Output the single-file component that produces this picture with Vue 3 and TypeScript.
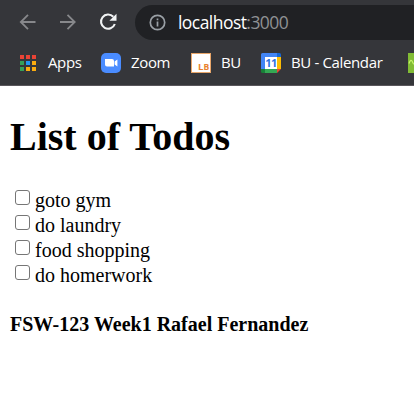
<script setup lang="ts">
import { ref } from 'vue'

interface Todo {
  id: number
  title: string
  done: boolean
}

const todos = ref<Todo[]>([
  { id: 1, title: 'goto gym', done: false },
  { id: 2, title: 'do laundry', done: false },
  { id: 3, title: 'food shopping', done: false },
  { id: 4, title: 'do homerwork', done: false },
])

const dots: string[] = [
  '#ea4335', '#ea4335', '#ea4335',
  '#34a05a', '#2196f3', '#fbac10',
  '#34a05a', '#fbac10', '#fbac10',
]
</script>

<template>
  <div class="window">
    <header class="chrome">
      <div class="toolbar">
        <svg class="nav back" width="18" height="18" viewBox="0 0 18 18">
          <path d="M16.5 9H2M9 1.8 1.8 9 9 16.2" />
        </svg>
        <svg class="nav forward" width="18" height="18" viewBox="0 0 18 18">
          <path d="M1 9h14.5M8.5 1.8 15.7 9l-7.2 7.2" />
        </svg>
        <svg class="reload" width="18" height="18" viewBox="0 0 18 18">
          <path class="arc" d="M14.3 3.8A7.1 7.1 0 1 0 15.8 11" />
          <path class="tip" d="M17.5 .7v7.1h-7.1z" />
        </svg>
        <div class="address">
          <svg class="info" width="17" height="17" viewBox="0 0 17 17">
            <circle cx="8.5" cy="8.5" r="7.2" />
            <path d="M8.5 7.5v5M8.5 4.5v1.7" />
          </svg>
          <span class="url">localhost<span class="port">:3000</span></span>
        </div>
      </div>
      <nav class="bookmarks">
        <a class="bookmark apps">
          <span class="grid"><i v-for="(c, i) in dots" :key="i" :style="{ background: c }"></i></span>
          <span class="label">Apps</span>
        </a>
        <a class="bookmark zoom">
          <svg width="20" height="20" viewBox="0 0 20 20">
            <rect width="20" height="20" rx="5" fill="#4a8cff" />
            <path d="M4 6h7q2 0 2 2v5.500H6q-2 0-2-2zM13.600 8.500 16.400 6.500v7l-2.800-2z" fill="#fff" />
          </svg>
          <span class="label">Zoom</span>
        </a>
        <a class="bookmark bu">
          <span class="lb">L<small>B</small></span>
          <span class="label">BU</span>
        </a>
        <a class="bookmark calendar">
          <svg width="20" height="20" viewBox="0 0 20 20">
            <path d="M0 1.500Q0 0 1.500 0H16v4H4v12H0z" fill="#4285f4" />
            <path d="M16 0h2.500Q20 0 20 1.500V4h-4z" fill="#1967d2" />
            <path d="M16 4h4v12h-4z" fill="#fbbc04" />
            <path d="M4 16h12v4H4z" fill="#34a853" />
            <path d="M0 16h4v4H1.500Q0 20 0 18.500z" fill="#188038" />
            <path d="M16 16h4l-4 4z" fill="#ea4335" />
            <path d="M4 4h12v12H4z" fill="#fff" />
            <text x="10" y="14" text-anchor="middle">11</text>
          </svg>
          <span class="label">BU - Calendar</span>
        </a>
        <a class="bookmark next">
          <svg width="20" height="20" viewBox="0 0 20 20">
            <rect width="20" height="20" fill="#82bc35" />
            <path d="M1 10.500Q3 5 4.500 9T8 10" fill="none" stroke="#c7f36b" stroke-width="1.200" />
          </svg>
        </a>
      </nav>
    </header>
    <main class="page">
      <h1>List of Todos</h1>
      <ul class="todos">
        <li v-for="todo in todos" :key="todo.id">
          <label>
            <input v-model="todo.done" type="checkbox" />
            <span>{{ todo.title }}</span>
          </label>
        </li>
      </ul>
      <h4>FSW-123 Week1 Rafael Fernandez</h4>
    </main>
  </div>
</template>

<style>
body {
  background: #fff;
  overflow: hidden;
}
</style>

<style scoped>
.window {
  width: 414px;
  height: 402px;
  overflow: hidden;
  background: #fff;
}
.chrome {
  box-sizing: border-box;
  height: 86px;
  background: #35363a;
  border-bottom: 1px solid #59565b;
  font-family: "Open Sans", "Noto Sans", sans-serif;
  color: #fff;
  overflow: hidden;
}
.toolbar {
  display: flex;
  align-items: center;
  height: 35px;
  padding: 5px 0 0 19px;
}
svg {
  display: block;
  flex: none;
}
.nav {
  fill: none;
  stroke: #87888b;
  stroke-width: 1.8;
  margin-right: 22px;
  position: relative;
  top: -1px;
}
.reload {
  position: relative;
  top: -1px;
}
.arc {
  fill: none;
  stroke: #f1f3f4;
  stroke-width: 2.1;
}
.tip {
  fill: #f1f3f4;
}
.address {
  display: flex;
  align-items: center;
  flex: none;
  width: 310px;
  height: 35px;
  box-sizing: border-box;
  margin-left: 18px;
  padding-left: 14px;
  border-radius: 18px;
  background: #202124;
}
.info {
  fill: none;
  stroke: #9aa0a6;
  stroke-width: 1.7;
}
.url {
  margin-left: 12px;
  font-size: 17.5px;
  letter-spacing: -0.55px;
  line-height: 35px;
  white-space: nowrap;
}
.port {
  color: #8f9194;
}
.bookmarks {
  display: flex;
  height: 45px;
  padding-left: 20px;
}
.bookmark {
  display: flex;
  align-items: center;
  flex: none;
}
.label {
  padding-bottom: 2px;
  font-size: 15px;
  letter-spacing: -0.36px;
  line-height: 20px;
  white-space: nowrap;
}
.grid {
  display: grid;
  grid-template-columns: repeat(3, 4px);
  grid-auto-rows: 4px;
  gap: 2px;
}
.apps {
  width: 81px;
  gap: 12px;
}
.zoom {
  width: 90px;
  gap: 10px;
}
.bu {
  width: 70px;
  gap: 10px;
}
.calendar {
  width: 147px;
  gap: 10px;
}
.lb {
  box-sizing: border-box;
  width: 20px;
  height: 20px;
  padding: 8px 0 0 6px;
  border: 1px solid #e8a66a;
  background: #fff;
  color: #e8822e;
  font: bold 9.500px/10px "Open Sans", sans-serif;
}
.lb small {
  font-size: 8.500px;
}
text {
  font: bold 11px "Open Sans", sans-serif;
  letter-spacing: -0.500px;
  fill: #2f72df;
}
.page {
  padding: 0 10px;
  color: #000;
  font-family: "Liberation Serif", "Times New Roman", serif;
  font-size: 20px;
}
h1 {
  margin: 0;
  padding-top: 28px;
  font-size: 40px;
  line-height: 46px;
}
.todos {
  list-style: none;
  margin: 0;
  padding: 28px 0 0 5px;
}
li {
  height: 25px;
}
label {
  display: flex;
  line-height: 25px;
}
input {
  appearance: none;
  box-sizing: border-box;
  flex: none;
  width: 15px;
  height: 15px;
  margin: 2px 5px 0 0;
  border: 1px solid #767676;
  border-radius: 3px;
  background: #fff;
}
input:checked {
  background: #0075ff;
}
h4 {
  margin: 0;
  padding-top: 24px;
  font-size: 20px;
  line-height: 24px;
  white-space: nowrap;
}
</style>
